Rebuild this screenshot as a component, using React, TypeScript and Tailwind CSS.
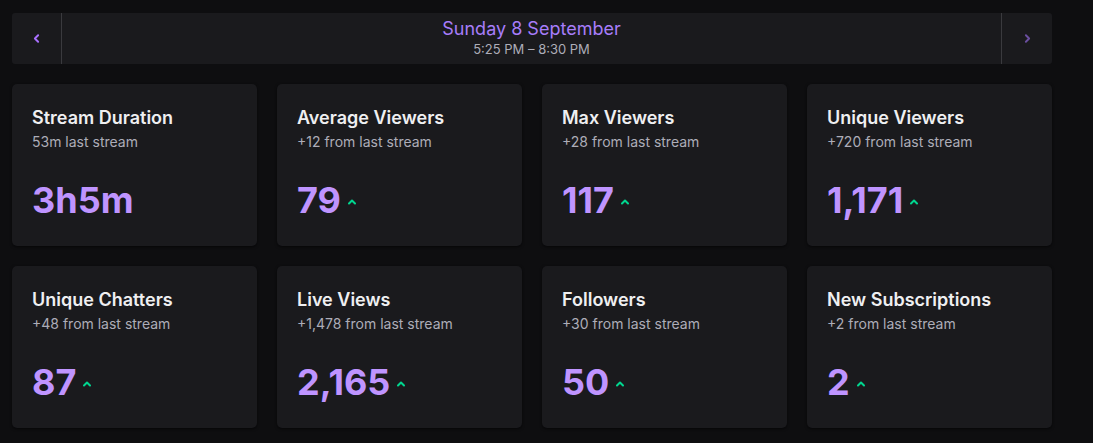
import { ChevronLeft, ChevronRight } from "lucide-react";

type Stat = {
  title: string;
  sub: string;
  value: string;
  up?: boolean;
};

const stats: Stat[] = [
  { title: "Stream Duration", sub: "53m last stream", value: "3h5m" },
  { title: "Average Viewers", sub: "+12 from last stream", value: "79", up: true },
  { title: "Max Viewers", sub: "+28 from last stream", value: "117", up: true },
  { title: "Unique Viewers", sub: "+720 from last stream", value: "1,171", up: true },
  { title: "Unique Chatters", sub: "+48 from last stream", value: "87", up: true },
  { title: "Live Views", sub: "+1,478 from last stream", value: "2,165", up: true },
  { title: "Followers", sub: "+30 from last stream", value: "50", up: true },
  { title: "New Subscriptions", sub: "+2 from last stream", value: "2", up: true },
];

const UpArrow = () => (
  <svg width="8" height="6" viewBox="0 0 8 6" className="mt-[3px]">
    <path d="M1 4.5 L4 1.5 L7 4.5" fill="none" stroke="#00d68f" strokeWidth="2" strokeLinecap="round" strokeLinejoin="round" />
  </svg>
);

const StatCard = ({ title, sub, value, up }: Stat) => {
  return (
    <div className="h-[162px] rounded-[5px] bg-[#1a1a1d] pl-5 pt-[22px] shadow-[0_1px_3px_rgba(0,0,0,0.6)]">
      <p className="text-[18px] font-semibold leading-6 text-[#efeff1]">{title}</p>
      <p className="mt-[2px] text-[14px] leading-5 text-[#adadb8]">{sub}</p>
      <div className="mt-7 flex items-center gap-[7px]">
        <span className="text-[36px] font-bold leading-10 text-[#bf94ff]">{value}</span>
        {up && <UpArrow />}
      </div>
    </div>
  );
};

export default function App() {
  return (
    <div
      className="h-[443px] w-full bg-[#0e0e10] pt-[13px]"
      style={{ fontFamily: "Inter, 'Noto Sans', sans-serif" }}
    >
      <div className="ml-3 w-[1040px]">
        <nav className="flex h-[51px] items-stretch rounded-[3px] bg-[#1a1a1d]">
          <button className="flex w-[50px] items-center justify-center border-r border-[#3a3a3e] text-[#a970ff]">
            <ChevronLeft className="size-[13px]" strokeWidth={3.5} />
          </button>
          <div className="flex flex-1 flex-col items-center pt-[5px]">
            <p className="text-[18px] leading-[22px] text-[#a77dfa]">Sunday 8 September</p>
            <p className="mt-[1px] text-[13px] leading-4 text-[#adadb8]">5:25 PM – 8:30 PM</p>
          </div>
          <button className="flex w-[51px] items-center justify-center border-l border-[#3a3a3e] text-[#6b4fa0]">
            <ChevronRight className="size-[13px]" strokeWidth={3.5} />
          </button>
        </nav>

        <div className="mt-5 grid grid-cols-4 gap-5">
          {stats.map((s) => (
            <StatCard key={s.title} {...s} />
          ))}
        </div>
      </div>
    </div>
  );
}
